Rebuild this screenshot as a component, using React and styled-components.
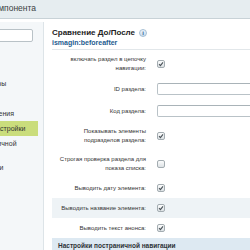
import React from "react";
import styled, { createGlobalStyle } from "styled-components";

const Global = createGlobalStyle`
  * { box-sizing: border-box; }
  html, body { margin: 0; padding: 0; background: #fff; overflow: hidden; }
  body { font-family: "Liberation Sans", Arial, sans-serif; color: #333; }
`;

const menu = [
  { text: "Основные параметры" },
  { text: "Внешний вид" },
  { text: "Настройки отображения" },
  { text: "Дополнительные настройки", active: true },
  { text: "Настройки постраничной навигации" },
  { text: "Основные настройки" },
];

const rows = [
  { label: "включать раздел в цепочку навигации:", type: "check", checked: true },
  { label: "ID раздела:", type: "input" },
  { label: "Код раздела:", type: "input" },
  { label: "Показывать элементы подразделов раздела:", type: "check", checked: true },
  { label: "Строгая проверка раздела для показа списка:", type: "check", checked: false },
  { label: "Выводить дату элемента:", type: "check", checked: true },
  { label: "Выводить название элемента:", type: "check", checked: true, highlight: true },
  { label: "Выводить текст анонса:", type: "check", checked: true },
];

export default function App() {
  return (
    <>
      <Global />
      <Page>
        <Header>
          <HeaderTitle>Параметры компонента</HeaderTitle>
        </Header>
        <Body>
          <Sidebar>
            <Search />
            <Menu>
              {menu.map((m) => (
                <MenuItem key={m.text} $active={m.active}>{m.text}</MenuItem>
              ))}
            </Menu>
          </Sidebar>
          <Main>
            <TitleRow>
              <Title>Сравнение До/После</Title>
              <Info>i</Info>
            </TitleRow>
            <Code>ismagin:beforeafter</Code>
            <Divider />
            {rows.map((r) => (
              <Row key={r.label} $highlight={r.highlight}>
                <Label>{r.label}</Label>
                {r.type === "input" ? <Input /> : <Check checked={r.checked} />}
              </Row>
            ))}
            <Section>Настройки постраничной навигации</Section>
          </Main>
        </Body>
      </Page>
    </>
  );
}

const Check = ({ checked }) => (
  <Box>
    {checked && (
      <svg width="6" height="6" viewBox="0 0 6 6">
        <path d="M1 3.2 L2.4 4.6 L5 1.4" fill="none" stroke="#4b5359" strokeWidth="1.1" />
      </svg>
    )}
  </Box>
);

const Page = styled.div`
  margin-left: -80px;
  width: 420px;
`;

const Header = styled.div`
  height: 19px;
  background: #e6edf0;
  border-bottom: 1px solid #c8d2d7;
  padding-left: 22px;
  display: flex;
  align-items: center;
`;

const HeaderTitle = styled.div`
  font-size: 8.5px;
  color: #3a3f42;
  margin-top: -2px;
`;

const Body = styled.div`
  display: flex;
  margin-top: 3px;
  height: 240px;
`;

const Sidebar = styled.div`
  width: 124px;
  flex: none;
  background: #f4f7f9;
  border-right: 1px solid #dde4e8;
  padding: 7px 10px 0 8px;
`;

const Search = styled.div`
  height: 13px;
  background: #fff;
  border: 1px solid #b9c2c7;
  border-radius: 2px;
`;

const Menu = styled.div`
  margin-top: 34px;
  margin-right: -5px;
  display: flex;
  flex-direction: column;
`;

const MenuItem = styled.div`
  font-size: 7px;
  line-height: 9px;
  padding: 3px 4px 3px 7px;
  color: #333;
  background: ${(p) => (p.$active ? "#cadd7c" : "transparent")};
`;

const Main = styled.div`
  flex: 1;
  padding: 6px 0 0 8px;
`;

const TitleRow = styled.div`
  display: flex;
  align-items: center;
  gap: 4px;
`;

const Title = styled.div`
  font-size: 8px;
  line-height: 10px;
  font-weight: bold;
  color: #222;
`;

const Info = styled.span`
  width: 8px;
  height: 8px;
  border-radius: 50%;
  border: 1px solid #a6bfd4;
  background: linear-gradient(#eef5fb, #c9dced);
  color: #356594;
  font-size: 6px;
  font-weight: bold;
  line-height: 6px;
  display: flex;
  justify-content: center;
`;

const Code = styled.div`
  font-size: 7px;
  line-height: 9px;
  font-weight: bold;
  color: #245b8f;
`;

const Divider = styled.div`
  margin-top: 2px;
  border-top: 1px solid #e2e7ea;
`;

const Row = styled.div`
  display: grid;
  grid-template-columns: 94px 1fr;
  column-gap: 11px;
  align-items: center;
  min-height: 20px;
  padding: 5px 0;
  background: ${(p) => (p.$highlight ? "#eef3f6" : "transparent")};
`;

const Label = styled.div`
  font-size: 6px;
  line-height: 9px;
  text-align: right;
  color: #333;
`;

const Input = styled.div`
  width: 150px;
  height: 12px;
  border: 1px solid #b9c2c7;
  border-top-color: #a9b3b8;
  border-radius: 2px;
  background: #fff;
`;

const Box = styled.span`
  width: 8px;
  height: 8px;
  border: 1px solid #a3acb1;
  border-radius: 2px;
  background: linear-gradient(#fbfcfc, #dde2e5);
  display: flex;
  align-items: center;
  justify-content: center;
`;

const Section = styled.div`
  height: 16px;
  padding-left: 6px;
  background: #dde9f2;
  font-size: 6.5px;
  font-weight: bold;
  line-height: 15px;
  color: #2d3236;
`;
